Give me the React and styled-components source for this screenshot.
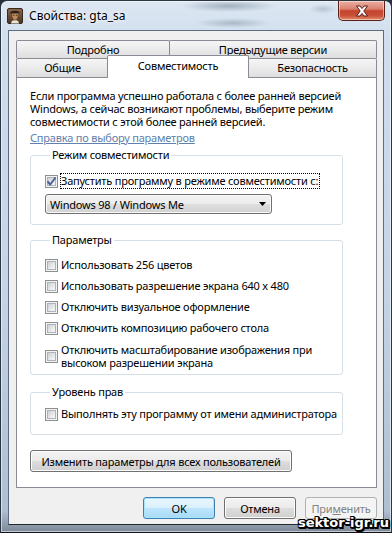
import React from "react";
import styled, { createGlobalStyle } from "styled-components";

const UI = `"Noto Sans", "Open Sans", "DejaVu Sans", sans-serif`;

const GlobalStyle = createGlobalStyle`
  html, body { margin: 0; padding: 0; }
  body {
    width: 392px; height: 533px; overflow: hidden;
    background: #26313d;
    font-family: ${UI};
    font-size: 11px;
    letter-spacing: -0.2px;
    color: #000;
  }
  *, *::before, *::after { box-sizing: border-box; }
`;

const Window = styled.div`
  position: relative;
  width: 392px;
  height: 533px;
  display: flex;
  flex-direction: column;
  border: 1px solid #2a3542;
  border-bottom-color: #101418;
  border-radius: 7px 7px 0 0;
  padding: 0 7px 7px;
  background:
    radial-gradient(ellipse 48px 6px at 228px 5px, rgba(60,78,98,.35), rgba(60,78,98,0)),
    radial-gradient(ellipse 38px 5px at 232px 22px, rgba(60,78,98,.28), rgba(60,78,98,0)),
    radial-gradient(ellipse 14px 5px at 322px 8px, rgba(60,78,98,.22), rgba(60,78,98,0)),
    linear-gradient(180deg, #dce7f2 0%, #cfdded 8%, #c4d4e5 55%, #aebfd2 96%, #7d8897 100%);
  box-shadow: inset 0 0 0 1px rgba(255,255,255,.55);
`;

const TitleBar = styled.div`
  margin: 0 -7px;
  height: 29px;
  flex: 0 0 29px;
  display: flex;
  align-items: center;
  padding: 0 6px;
`;

const TitleText = styled.span`
  margin-left: 6px;
  font-size: 12px;
  letter-spacing: 0;
  color: #000;
  text-shadow: 0 0 6px #fff, 0 0 3px #fff;
  flex: 1;
`;

const CloseButton = styled.div`
  align-self: flex-start;
  width: 47px;
  height: 20px;
  border: 1px solid #5c2017;
  border-top: none;
  border-radius: 0 0 5px 5px;
  background: linear-gradient(180deg, #eab0a3 0%, #d98170 42%, #c4432c 52%, #c9513a 78%, #e2906f 100%);
  box-shadow: inset 0 0 0 1px rgba(255,255,255,.45);
  display: flex;
  align-items: center;
  justify-content: center;
`;

const Client = styled.div`
  flex: 1;
  display: flex;
  flex-direction: column;
  background: #f0f0f0;
  border: 1px solid #5f6e7f;
  border-bottom-color: #22282f;
  padding: 9px 6px 0 7px;
`;

const TabRow = styled.div`
  display: flex;
  align-items: flex-end;
  height: ${(p) => p.$h}px;
`;

const Tab = styled.div`
  flex: 0 0 ${(p) => p.$w}px;
  height: 100%;
  margin-left: ${(p) => p.$ml || 0}px;
  border: 1px solid #898c95;
  border-bottom: none;
  border-radius: 2px 2px 0 0;
  background: linear-gradient(180deg, #f5f5f5 0%, #ebebeb 50%, #dedede 100%);
  display: flex;
  align-items: center;
  justify-content: center;
  padding-bottom: ${(p) => p.$pb || 0}px;
  white-space: nowrap;
`;

const ActiveTab = styled(Tab)`
  position: relative;
  z-index: 1;
  height: 23px;
  margin-bottom: -1px;
  background: #fff;
  padding-bottom: 4px;
`;

const Panel = styled.div`
  height: 411px;
  flex: 0 0 411px;
  border: 1px solid #898c95;
  background: #fff;
  padding: 11px 13px 0 13px;
  display: flex;
  flex-direction: column;
  align-items: flex-start;
`;

const Intro = styled.p`
  margin: 0;
  line-height: 13px;
  white-space: nowrap;
`;

const HelpLink = styled.a`
  margin-top: 3px;
  line-height: 13px;
  color: #5e81ad;
  text-decoration: underline;
  cursor: pointer;
`;

const Group = styled.fieldset`
  margin: ${(p) => p.$mt}px 0 0 0;
  width: 313px;
  min-inline-size: 0;
  border: 1px solid #d5dfe5;
  border-radius: 3px;
  padding: ${(p) => p.$pt}px 8px ${(p) => p.$pb}px 14px;
  display: flex;
  flex-direction: column;
  align-items: flex-start;
`;

const Legend = styled.legend`
  margin-left: 5px;
  padding: 0 2px;
  line-height: 14px;
  color: #000;
`;

const CheckRow = styled.div`
  display: flex;
  align-items: center;
  gap: ${(p) => (p.$focus ? 2 : 3)}px;
  min-height: 16px;
  margin-top: ${(p) => p.$mt || 0}px;
  white-space: nowrap;
`;

const Box = styled.span`
  flex: 0 0 13px;
  width: 13px;
  height: 13px;
  border: 1px solid #8e8f8f;
  background: #f4f4f4;
  display: flex;
  align-items: center;
  justify-content: center;
`;

const BoxInner = styled.span`
  width: 9px;
  height: 9px;
  border: 1px solid #aeb3b9;
  background: linear-gradient(135deg, #cdd0d4 0%, #e6e8ea 55%, #f9f9f9 100%);
  display: flex;
  align-items: center;
  justify-content: center;
  overflow: visible;
`;

const CheckLabel = styled.span`
  line-height: ${(p) => (p.$multi ? 13 : 14)}px;
  border: 1px ${(p) => (p.$focus ? "dotted #000" : "solid transparent")};
  border-left-width: ${(p) => (p.$focus ? 1 : 0)}px;
  padding-right: 1px;
`;

const Select = styled.div`
  margin-top: 5px;
  width: 227px;
  height: 20px;
  border: 1px solid #707070;
  border-radius: 3px;
  background: linear-gradient(180deg, #f3f3f3 0%, #ececec 50%, #dedede 52%, #d2d2d2 100%);
  box-shadow: inset 0 0 0 1px #fafafa;
  display: flex;
  align-items: center;
  justify-content: space-between;
  padding: 0 5px 0 4px;
`;

const Button = styled.div`
  width: ${(p) => p.$w}px;
  height: 22px;
  flex-shrink: 0;
  margin-top: ${(p) => p.$mt || 0}px;
  border: 1px solid ${(p) => (p.$default ? "#3c7fb1" : p.$disabled ? "#adb2b5" : "#707070")};
  border-radius: 3px;
  background: ${(p) =>
    p.$default
      ? "linear-gradient(180deg, #eaf6fd 0%, #d9f0fc 50%, #bee6fd 52%, #a7d9f5 100%)"
      : p.$disabled
      ? "#f4f4f4"
      : "linear-gradient(180deg, #f3f3f3 0%, #ebebeb 50%, #dddddd 52%, #cfcfcf 100%)"};
  box-shadow: inset 0 0 0 1px ${(p) => (p.$default ? "#a8e4fb" : p.$disabled ? "#f4f4f4" : "#fcfcfc")};
  color: ${(p) => (p.$disabled ? "#838383" : "#000")};
  display: flex;
  align-items: center;
  justify-content: center;
  white-space: nowrap;
`;

const ButtonBar = styled.div`
  margin-top: 9px;
  display: flex;
  justify-content: flex-end;
  gap: 9px;
`;

const Watermark = styled.div`
  position: absolute;
  right: 2px;
  bottom: 1px;
  font-family: "DejaVu Sans", sans-serif;
  font-weight: bold;
  font-size: 13px;
  line-height: 16px;
  color: #fff;
  letter-spacing: 0;
  text-shadow:
    1px 1px 0 #000, -1px -1px 0 #000, 1px -1px 0 #000, -1px 1px 0 #000,
    2px 2px 0 #000, 0 2px 0 #000, 2px 0 0 #000, 0 -1px 0 #000;
`;

function CheckBox({ checked, focus, multi, children, mt }) {
  return (
    <CheckRow $mt={mt} $focus={focus}>
      <Box>
        <BoxInner>
          {checked && (
            <svg width="11" height="11" viewBox="0 0 11 11" style={{ overflow: "visible" }}>
              <path d="M1.5 5.5 L4.3 8.5 L9.5 1.5" fill="none" stroke="#4a5f97" strokeWidth="1.9" strokeLinejoin="round" />
            </svg>
          )}
        </BoxInner>
      </Box>
      <CheckLabel $focus={focus} $multi={multi}>{children}</CheckLabel>
    </CheckRow>
  );
}

function AppIcon() {
  return (
    <svg width="16" height="16" viewBox="0 0 16 16">
      <defs>
        <linearGradient id="bg" x1="0" y1="0" x2="0" y2="1">
          <stop offset="0" stopColor="#8a6a4c" />
          <stop offset="1" stopColor="#4a3322" />
        </linearGradient>
      </defs>
      <rect x="0.5" y="0.5" width="15" height="15" rx="1.5" fill="url(#bg)" stroke="#3a2a1c" />
      <path d="M3 5 C4 2.5 9 2 11.5 3.5 L13 5 L10 5.5 L5 5.8 Z" fill="#2a1d14" />
      <path d="M5 5.5 C5 9 6 11.5 8 12 C10 11.5 11 9 11 5.5 Z" fill="#c08a5c" />
      <path d="M5.8 7.2 h1.6 M8.8 7.2 h1.6" stroke="#3a2415" strokeWidth="0.9" />
      <path d="M4 15.5 C4.5 12.5 6 12 8 12.5 C10 12 11.5 12.5 12 15.5 Z" fill="#e8e2d8" />
    </svg>
  );
}

function CloseGlyph() {
  return (
    <svg width="14" height="12" viewBox="0 0 14 12">
      <path
        d="M1.5 1 L5 1 L7 3.6 L9 1 L12.5 1 L8.8 6 L12.5 11 L9 11 L7 8.4 L5 11 L1.5 11 L5.2 6 Z"
        fill="#fff"
        stroke="#5a1d14"
        strokeWidth="1"
        strokeLinejoin="round"
      />
    </svg>
  );
}

export default function App() {
  return (
    <>
      <GlobalStyle />
      <Window>
        <TitleBar>
          <AppIcon />
          <TitleText>Свойства: gta_sa</TitleText>
          <CloseButton>
            <CloseGlyph />
          </CloseButton>
        </TitleBar>
        <Client>
          <TabRow $h={18}>
            <Tab $w={154}>Подробно</Tab>
            <Tab $w={208} $ml={-1}>Предыдущие версии</Tab>
          </TabRow>
          <TabRow $h={19}>
            <Tab $w={93} $pb={2}>Общие</Tab>
            <ActiveTab $w={142} $ml={-2}>Совместимость</ActiveTab>
            <Tab $w={129} $ml={-1} $pb={2}>Безопасность</Tab>
          </TabRow>
          <Panel>
            <Intro>
              Если программа успешно работала с более ранней версией
              <br />
              Windows, а сейчас возникают проблемы, выберите режим
              <br />
              совместимости с этой более ранней версией.
            </Intro>
            <HelpLink>Справка по выбору параметров</HelpLink>

            <Group $mt={4} $pt={11} $pb={10}>
              <Legend>Режим совместимости</Legend>
              <CheckBox checked focus>
                Запустить программу в режиме совместимости с:
              </CheckBox>
              <Select>
                <span>Windows 98 / Windows Me</span>
                <svg width="7" height="4" viewBox="0 0 7 4">
                  <path d="M0 0 H7 L3.5 4 Z" fill="#000" />
                </svg>
              </Select>
            </Group>

            <Group $mt={8} $pt={10} $pb={4}>
              <Legend>Параметры</Legend>
              <CheckBox>Использовать 256 цветов</CheckBox>
              <CheckBox mt={5}>Использовать разрешение экрана 640 x 480</CheckBox>
              <CheckBox mt={5}>Отключить визуальное оформление</CheckBox>
              <CheckBox mt={5}>Отключить композицию рабочего стола</CheckBox>
              <CheckBox mt={6} multi>
                Отключить масштабирование изображения при
                <br />
                высоком разрешении экрана
              </CheckBox>
            </Group>

            <Group $mt={10} $pt={7} $pb={12}>
              <Legend>Уровень прав</Legend>
              <CheckBox>Выполнять эту программу от имени администратора</CheckBox>
            </Group>

            <Button $w={262} $mt={15}>Изменить параметры для всех пользователей</Button>
          </Panel>
          <ButtonBar>
            <Button $w={72} $default>OK</Button>
            <Button $w={72}>Отмена</Button>
            <Button $w={72} $disabled>
              При<u>м</u>енить
            </Button>
          </ButtonBar>
        </Client>
        <Watermark>sektor-igr.ru</Watermark>
      </Window>
    </>
  );
}
